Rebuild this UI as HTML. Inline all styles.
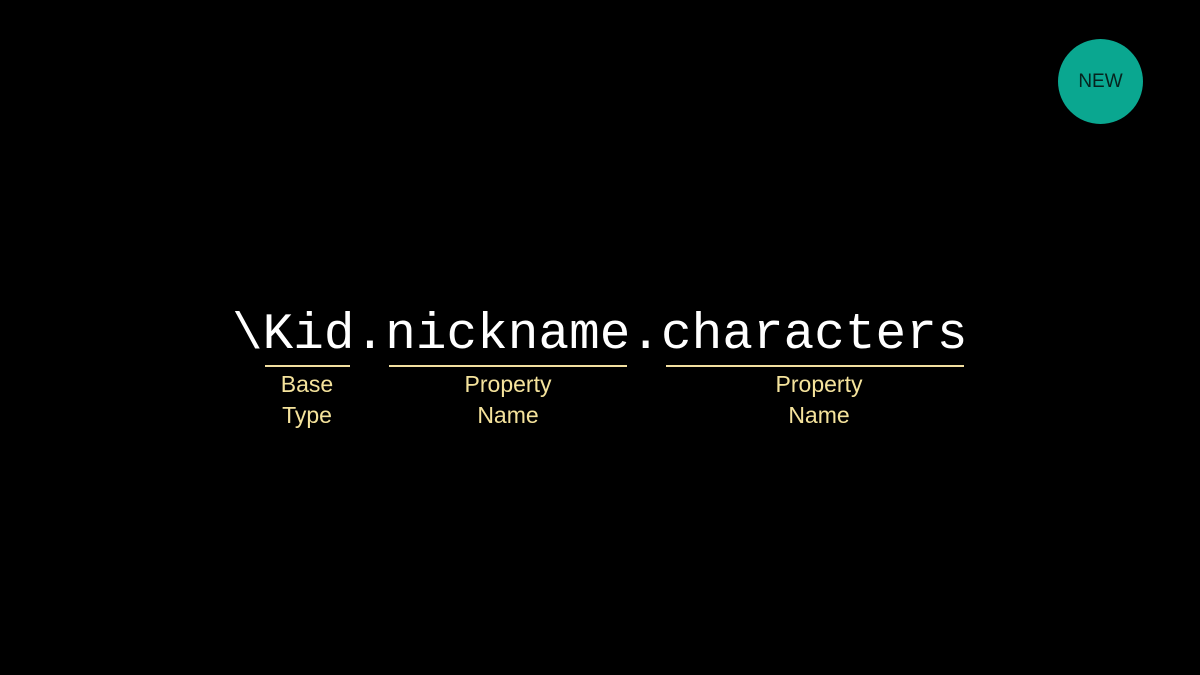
<!DOCTYPE html>
<html><head><style>
body{margin:0;width:1200px;height:675px;background:#000;position:relative;overflow:hidden;font-family:"Liberation Sans",sans-serif}
.code{position:absolute;left:232px;top:306px;font-family:"Liberation Mono",monospace;font-size:51px;color:#fff;line-height:60px;white-space:pre;letter-spacing:0.04px}
.u{position:absolute;top:365px;height:2px;background:#f2dfa0}
.l{position:absolute;color:#f5e39c;font-size:23px;line-height:31px;text-align:center;width:200px;top:369px}
.new{position:absolute;left:1058px;top:39px;width:85px;height:85px;border-radius:50%;background:#0aa790;color:#06231e;font-size:19px;line-height:85px;text-align:center}
</style></head><body>
<div class="code">\Kid.nickname.characters</div>
<div class="u" style="left:265px;width:85px"></div>
<div class="u" style="left:389px;width:238px"></div>
<div class="u" style="left:666px;width:298px"></div>
<div class="l" style="left:207px">Base<br>Type</div>
<div class="l" style="left:408px">Property<br>Name</div>
<div class="l" style="left:719px">Property<br>Name</div>
<div class="new">NEW</div>
</body></html>
